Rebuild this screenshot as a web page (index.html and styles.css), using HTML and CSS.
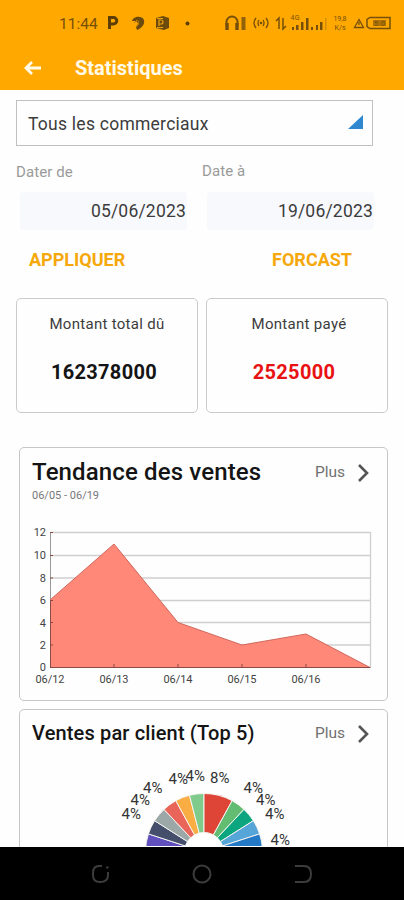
FILE: index.html
```html
<!DOCTYPE html>
<html lang="fr">
<head>
    <meta charset="UTF-8">
    <meta name="viewport" content="width=device-width, initial-scale=1.0">
    <title>Statistiques</title>
    <link rel="stylesheet" href="styles.css">
</head>
<body>
    <div class="screen">
        <header class="header">
            <div class="status-bar">
                <span class="clock">11:44</span>
                <svg class="status-left" width="96" height="18" viewBox="0 0 96 18">
                    <path d="M3.500 15V3.500h4a3 3 0 0 1 0 6.500H4" fill="none" stroke="#5d3f05" stroke-width="3"/>
                    <path d="M26 7c1-5 10-6 12-1 1 4-2 8-7 10l-1-3 3-3-3-3z" fill="#6b4a0c"/>
                    <path d="M28 9l3-3 2 2-2 4" fill="none" stroke="#b87b08" stroke-width="1"/>
                    <path d="M50 4l7-2 6 2v10l-5 2-8-2z" fill="#6b4a0c"/>
                    <path d="M53 12V6h2a1.500 1.500 0 0 1 0 4h-2M51 4.500h6M51 13.500h6" fill="none" stroke="#eaa010" stroke-width="1.200"/>
                    <circle cx="81.500" cy="9.500" r="2" fill="#5d3f05"/>
                </svg>
                <svg class="status-right" width="170" height="20" viewBox="222 13 170 20">
                    <g fill="none" stroke="#76500a">
                        <path d="M226.500 25v-3a5.500 5.500 0 0 1 11 0v3" stroke-width="2"/>
                        <path d="M227 23v7M237 23v7" stroke-width="3.500"/>
                        <path d="M243.500 17v13" stroke-width="4" opacity=".8"/>
                        <path d="M256 18q-4 5 0 10M259 20q-2 3 0 6M263 20q2 3 0 6M266 18q4 5 0 10" stroke-width="1.300"/>
                        <path d="M276 21l3-3v11M283 18v11l3-3" stroke-width="1.500"/>
                        <path d="M354.500 27.500l4.500-8 4.500 8zM359 22v3" stroke-width="1.300"/>
                        <path d="M370 17.500h20v11h-20l-3-2v-7z" stroke-width="1.500"/>
                    </g>
                    <g fill="#76500a">
                        <circle cx="261" cy="23" r="1.300"/>
                        <path d="M292 27h2v3h-2zM296 25h2.500v5h-2.500zM301 22h2.500v8h-2.500zM306 18h2.500v12h-2.500zM311 27h2v3h-2zM316 25h2v5h-2zM320 22h2.500v8h-2.500z"/>
                        <path d="M325 18h1.500v12h-1.500z" opacity=".3"/>
                        <path d="M373 20h13v6h-13z" opacity=".6"/>
                    </g>
                    <g class="status-text">
                        <text x="290.500" y="20" textLength="9">4G</text>
                        <text x="333.500" y="21" textLength="13">19,8</text>
                        <text x="334.500" y="30" textLength="11">K/s</text>
                        <text x="374" y="26" textLength="11">50</text>
                    </g>
                </svg>
            </div>
            <div class="title-bar">
                <svg width="20" height="16" viewBox="0 0 20 16">
                    <path d="M18 8H3M9 2L3 8l6 6" fill="none" stroke="#fffbe8" stroke-width="2.800"/>
                </svg>
                <h1>Statistiques</h1>
            </div>
        </header>

        <main class="content">
            <div class="select">
                <span>Tous les commerciaux</span>
                <svg width="15" height="15" viewBox="0 0 15 15"><path d="M15 0v14H0z" fill="#2f88cf"/></svg>
            </div>

            <div class="dates">
                <div class="field">
                    <label>Dater de</label>
                    <div class="date">05/06/2023</div>
                </div>
                <div class="field field-end">
                    <label>Date à</label>
                    <div class="date">19/06/2023</div>
                </div>
            </div>

            <div class="actions">
                <span class="apply">APPLIQUER</span>
                <span class="forecast">FORCAST</span>
            </div>

            <div class="totals">
                <div class="total">
                    <p>Montant total dû</p>
                    <strong>162378000</strong>
                </div>
                <div class="total paid">
                    <p>Montant payé</p>
                    <strong>2525000</strong>
                </div>
            </div>

            <section class="card trend">
                <div class="card-head">
                    <h2>Tendance des ventes</h2>
                    <span class="more">Plus</span>
                    <svg class="chevron" width="12" height="18" viewBox="0 0 12 18"><path d="M2 1l8 8-8 8" fill="none" stroke="#555" stroke-width="2.600"/></svg>
                </div>
                <p class="period">06/05 - 06/19</p>
                <svg class="area-chart" width="366" height="165" viewBox="21 520 366 165">
                    <path d="M50 532.500h320M50 555.500h320M50 578h320M50 600.500h320M50 622.500h320M50 645h320M370.500 532v135" fill="none" stroke="#cfcfcf" stroke-width="1.300"/>
                    <path d="M50.500 532v136" stroke="#999"/>
                    <path d="M50 600L114 544 178 622.500 242 645 306 634 370 667.500H50z" fill="#ff8878"/>
                    <path d="M50 600L114 544 178 622.500 242 645 306 634 370 667.500" fill="none" stroke="#d0685c"/>
                    <path d="M50 667.500h320.500M50.500 600v68M50 532.500h3M50 555.500h3M50 578h3M50 600.500h3M50 622.500h3M50 645h3M114 664v4M178 664v4M242 664v4M306 664v4" fill="none" stroke="#8d4a42"/>
                    <g class="axis-y">
                        <text x="46" y="536">12</text>
                        <text x="46" y="559">10</text>
                        <text x="46" y="582">8</text>
                        <text x="46" y="604">6</text>
                        <text x="46" y="626.500">4</text>
                        <text x="46" y="649">2</text>
                        <text x="46" y="671">0</text>
                    </g>
                    <g class="axis-x">
                        <text x="35.500" y="682.500" textLength="29">06/12</text>
                        <text x="99.500" y="682.500" textLength="29">06/13</text>
                        <text x="163.500" y="682.500" textLength="29">06/14</text>
                        <text x="227.500" y="682.500" textLength="29">06/15</text>
                        <text x="291.500" y="682.500" textLength="29">06/16</text>
                    </g>
                </svg>
            </section>

            <section class="card clients">
                <div class="card-head">
                    <h3>Ventes par client (Top 5)</h3>
                    <span class="more">Plus</span>
                    <svg class="chevron" width="12" height="18" viewBox="0 0 12 18"><path d="M2 1l8 8-8 8" fill="none" stroke="#555" stroke-width="2.600"/></svg>
                </div>
                <svg class="donut" width="366" height="92" viewBox="21 755 366 92">
                    <g transform="translate(204 853)" stroke="#f4f4f0" stroke-width="1">
                        <path d="M0 0L-58.500 0A58.500 58.500 0 0 1-55.600-18.100z" fill="#6050bd"/>
                        <path d="M0 0L-55.600-18.100A58.500 58.500 0 0 1-49.400-31.300z" fill="#454f6c"/>
                        <path d="M0 0L-49.400-31.300A58.500 58.500 0 0 1-40-42.600z" fill="#9ca8a8"/>
                        <path d="M0 0L-40-42.600A58.500 58.500 0 0 1-28.200-51.300z" fill="#e96459"/>
                        <path d="M0 0L-28.200-51.300A58.500 58.500 0 0 1-14.500-56.700z" fill="#faad43"/>
                        <path d="M0 0L-14.500-56.700A58.500 58.500 0 0 1 0-58.500z" fill="#80cb8c"/>
                        <path d="M0 0V-58.500A58.500 58.500 0 0 1 28.200-51.300z" fill="#df4536"/>
                        <path d="M0 0L28.200-51.300A58.500 58.500 0 0 1 40-42.600z" fill="#62bc71"/>
                        <path d="M0 0L40-42.600A58.500 58.500 0 0 1 49.400-31.300z" fill="#0ba580"/>
                        <path d="M0 0L49.400-31.300A58.500 58.500 0 0 1 55.600-18.100z" fill="#55a5d8"/>
                        <path d="M0 0L55.600-18.100A58.500 58.500 0 0 1 58.400-3.700V0z" fill="#2379c6"/>
                        <circle r="19.500" fill="#fff"/>
                    </g>
                    <g class="percents">
                        <text x="121.500" y="820">4%</text>
                        <text x="130.500" y="806">4%</text>
                        <text x="143" y="794">4%</text>
                        <text x="168.500" y="785">4%</text>
                        <text x="185.500" y="781.500">4%</text>
                        <text x="210" y="783.500">8%</text>
                        <text x="243.500" y="794">4%</text>
                        <text x="256" y="806">4%</text>
                        <text x="265" y="820">4%</text>
                        <text x="270.500" y="846">4%</text>
                    </g>
                </svg>
            </section>
        </main>

        <nav class="nav-bar">
            <svg width="20" height="20" viewBox="0 0 20 20"><path d="M11 2H8Q2 2 2 9v2q0 7 7 7 8 0 8-7V8M15 3.500h2.500" fill="none" stroke="#3c3c3c" stroke-width="2"/></svg>
            <svg width="20" height="20" viewBox="0 0 20 20"><circle cx="10" cy="10" r="8.500" fill="none" stroke="#3c3c3c" stroke-width="2"/></svg>
            <svg width="20" height="20" viewBox="0 0 20 20"><path d="M2 2h9q7 0 7 8t-7 8H2" fill="none" stroke="#3c3c3c" stroke-width="2"/></svg>
        </nav>
    </div>
</body>
</html>
```

FILE: styles.css
```css
* {
    box-sizing: border-box;
}

body {
    margin: 0;
    font-family: Roboto, "Liberation Sans", sans-serif;
    background-color: #fefefe;
    color: #3c3c3c;
}

h1, h2, h3, p {
    margin: 0;
}

svg {
    display: block;
    flex: none;
}

.screen {
    display: flex;
    flex-direction: column;
    width: 404px;
    height: 900px;
    overflow: hidden;
}

.header {
    flex: none;
    height: 90px;
    background-color: #ffa800;
}

.status-bar {
    display: flex;
    align-items: center;
    height: 46px;
    padding-left: 59px;
}

.clock {
    width: 47px;
    padding-top: 1px;
    font-size: 15.5px;
    color: #76500a;
}

.status-right {
    margin-left: 20px;
}

.status-text {
    font-size: 7px;
    fill: #76500a;
}

.title-bar {
    display: flex;
    align-items: center;
    height: 44px;
    padding-left: 23px;
}

.title-bar h1 {
    margin-left: 32px;
    font-size: 20px;
    font-weight: 700;
    line-height: 44px;
    color: #fffbe8;
}

.content {
    flex: 1;
    min-height: 0;
    overflow: hidden;
    padding: 10px 16px 0;
}

.select {
    display: flex;
    align-items: center;
    justify-content: space-between;
    width: 357px;
    height: 46px;
    padding: 0 9px 2px 11px;
    border: 1px solid #c0c0c0;
    font-size: 17.5px;
    letter-spacing: 0.25px;
}

.select span {
    padding-top: 3px;
}

.dates {
    display: flex;
    gap: 16px;
    margin-top: 17px;
}

.field {
    width: 171px;
}

.field label {
    display: block;
    height: 29px;
    font-size: 15px;
    line-height: 18px;
    letter-spacing: 0.1px;
    color: #9a9a9a;
}

.field-end label {
    margin-top: -1px;
    margin-left: -1px;
    height: 30px;
}

.date {
    height: 38px;
    margin-left: 4px;
    padding-right: 1px;
    border-radius: 4px;
    background-color: #f8f9fd;
    font-size: 17.5px;
    line-height: 38px;
    letter-spacing: 0.2px;
    text-align: right;
}

.actions {
    display: flex;
    justify-content: space-between;
    height: 68px;
    padding: 19px 36px 0 13px;
    font-size: 18px;
    font-weight: 700;
    line-height: 22px;
    color: #f5a80b;
}

.totals {
    display: flex;
    gap: 8px;
}

.total {
    width: 182px;
    height: 115px;
    padding-top: 16px;
    border: 1px solid #cbcbcb;
    border-radius: 5px;
    text-align: center;
}

.total p {
    font-size: 15px;
    line-height: 18px;
    letter-spacing: 0.3px;
}

.total strong {
    display: block;
    margin-top: 27px;
    padding-right: 6px;
    font-size: 20px;
    line-height: 24px;
    letter-spacing: 0.3px;
    color: #141414;
}

.paid p {
    padding-left: 4px;
}

.total.paid strong {
    color: #e81212;
}

.card {
    width: 369px;
    margin-left: 3px;
    border: 1px solid #c6c6c6;
    border-radius: 5px;
}

.trend {
    height: 254px;
    margin-top: 34px;
}

.clients {
    height: 200px;
    margin-top: 8px;
}

.card-head {
    display: flex;
    align-items: center;
    height: 46px;
    padding: 0 18px 0 12px;
    color: #141414;
}

.trend .card-head {
    height: 48px;
}

.card-head h2 {
    font-size: 24px;
    font-weight: 500;
    letter-spacing: 0.13px;
}

.card-head h3 {
    font-size: 20px;
    font-weight: 500;
    letter-spacing: 0.15px;
}

.more {
    margin-left: auto;
    font-size: 15.5px;
    color: #707070;
}

.chevron {
    margin-top: 1px;
    margin-left: 12px;
}

.period {
    height: 24px;
    padding-left: 12px;
    margin-top: -7px;
    font-size: 11px;
    line-height: 14px;
    color: #777;
}

.area-chart {
    margin-top: 7px;
    margin-left: 1px;
}

.axis-y, .axis-x {
    font-size: 11px;
    fill: #444;
}

.axis-y {
    text-anchor: end;
}

.donut {
    margin-top: -2px;
    margin-left: 1px;
}

.percents {
    font-size: 15px;
    fill: #333;
}

.nav-bar {
    display: flex;
    flex: none;
    align-items: center;
    justify-content: center;
    gap: 81px;
    height: 53px;
    background-color: #000;
}
```
